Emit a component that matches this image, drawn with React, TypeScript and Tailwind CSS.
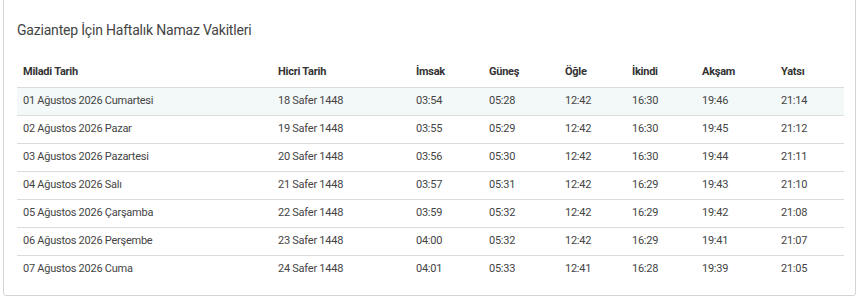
import React from "react";

const rows = [
  ["01 Ağustos 2026 Cumartesi", "18 Safer 1448", "03:54", "05:28", "12:42", "16:30", "19:46", "21:14"],
  ["02 Ağustos 2026 Pazar", "19 Safer 1448", "03:55", "05:29", "12:42", "16:30", "19:45", "21:12"],
  ["03 Ağustos 2026 Pazartesi", "20 Safer 1448", "03:56", "05:30", "12:42", "16:30", "19:44", "21:11"],
  ["04 Ağustos 2026 Salı", "21 Safer 1448", "03:57", "05:31", "12:42", "16:29", "19:43", "21:10"],
  ["05 Ağustos 2026 Çarşamba", "22 Safer 1448", "03:59", "05:32", "12:42", "16:29", "19:42", "21:08"],
  ["06 Ağustos 2026 Perşembe", "23 Safer 1448", "04:00", "05:32", "12:42", "16:29", "19:41", "21:07"],
  ["07 Ağustos 2026 Cuma", "24 Safer 1448", "04:01", "05:33", "12:41", "16:28", "19:39", "21:05"],
];

const headers = ["Miladi Tarih", "Hicri Tarih", "İmsak", "Güneş", "Öğle", "İkindi", "Akşam", "Yatsı"];
const widths = ["w-[255px]", "w-[138px]", "w-[73px]", "w-[76px]", "w-[67px]", "w-[70px]", "w-[79px]", "w-[69px]"];

export default function App() {
  return (
    <div className="w-[860px] h-[300px] bg-white font-['Roboto',sans-serif] overflow-hidden">
      <div className="ml-[3px] w-[853px] h-[297px] -mt-[1px] border border-[#d4d4d4] rounded-b-[3px] px-[13px] pt-[1px]">
        <h3 className="text-[14px] tracking-[-0.2px] leading-[20px] text-[#444] mt-[19px] mb-[19px]">
          Gaziantep İçin Haftalık Namaz Vakitleri
        </h3>
        <table className="w-[827px] border-collapse text-[11px] tracking-[-0.25px]">
          <thead>
            <tr className="h-[28px] border-b border-[#dcdcdc]">
              {headers.map((h, i) => (
                <th key={h} className={`${widths[i]} text-left font-bold text-[#333] px-[6px] pb-[2px]`}>
                  {h}
                </th>
              ))}
            </tr>
          </thead>
          <tbody>
            {rows.map((r, ri) => (
              <tr
                key={ri}
                className={`h-[28px] ${ri < rows.length - 1 ? "border-b border-[#dcdcdc]" : ""} ${ri === 0 ? "bg-[#f3f8f8]" : ""}`}
              >
                {r.map((c, ci) => (
                  <td key={ci} className="px-[6px] text-[#444]">
                    {c}
                  </td>
                ))}
              </tr>
            ))}
          </tbody>
        </table>
      </div>
    </div>
  );
}
